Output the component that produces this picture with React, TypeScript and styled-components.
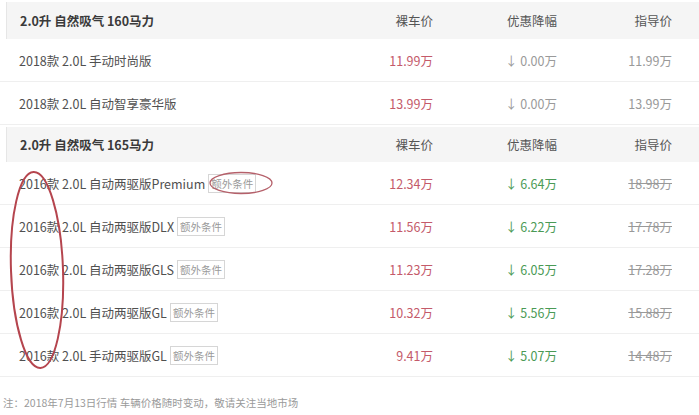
import React from "react";
import styled, { createGlobalStyle } from "styled-components";

const Global = createGlobalStyle`
  html, body { margin: 0; padding: 0; background: #fff; }
  body { font-family: "Noto Sans CJK SC", "Noto Sans", sans-serif; }
`;

const Page = styled.div`
  position: relative;
  width: 699px;
  height: 415px;
  overflow: hidden;
  background: #fff;
`;

const Table = styled.div`
  display: flex;
  flex-direction: column;
`;

const GroupHead = styled.div<{ $h: number }>`
  display: grid;
  grid-template-columns: 1fr 100px 124px 115px;
  align-items: center;
  height: ${(p) => p.$h}px;
  margin: 2px 0 0 6px;
  padding: 0 27px 0 13px;
  background: #f5f5f5;
  border-left: 1px solid #e6e6e6;
  font-size: 12.5px;
  color: #555;
`;

const GroupTitle = styled.div`
  font-weight: bold;
  color: #3a3a3a;
`;

const Row = styled.div`
  display: grid;
  grid-template-columns: 1fr 100px 124px 115px;
  align-items: center;
  height: 43px;
  padding: 0 27px 0 19px;
  border-bottom: 1px solid #efefef;
  box-sizing: border-box;
  font-size: 12.5px;
  color: #505050;
`;

const Cell = styled.div`
  text-align: right;
  white-space: nowrap;
`;

const Name = styled.div`
  display: flex;
  align-items: center;
  white-space: nowrap;
`;

const Tag = styled.span`
  display: inline-block;
  margin-left: 3px;
  padding: 0 2px;
  height: 17px;
  line-height: 17px;
  border: 1px solid #d6d6d6;
  font-size: 10.5px;
  color: #9a9a9a;
`;

const Price = styled(Cell)`
  color: #c45a6a;
`;

const Drop = styled(Cell)<{ $zero: boolean }>`
  color: ${(p) => (p.$zero ? "#9a9a9a" : "#4a9a55")};
`;

const Guide = styled(Cell)<{ $strike: boolean }>`
  color: #999;
  text-decoration: ${(p) => (p.$strike ? "line-through" : "none")};
`;

const Note = styled.div`
  padding: 18px 0 0 3px;
  font-size: 10.5px;
  color: #9a9a9a;
`;

const Marks = styled.svg`
  position: absolute;
  left: 0;
  top: 0;
  pointer-events: none;
`;

type Car = { name: string; tag?: boolean; price: string; drop: string; guide: string };

const groups: { title: string; h: number; cars: Car[] }[] = [
  {
    title: "2.0升 自然吸气 160马力",
    h: 37,
    cars: [
      { name: "2018款 2.0L 手动时尚版", price: "11.99万", drop: "0.00万", guide: "11.99万" },
      { name: "2018款 2.0L 自动智享豪华版", price: "13.99万", drop: "0.00万", guide: "13.99万" },
    ],
  },
  {
    title: "2.0升 自然吸气 165马力",
    h: 35,
    cars: [
      { name: "2016款 2.0L 自动两驱版Premium", tag: true, price: "12.34万", drop: "6.64万", guide: "18.98万" },
      { name: "2016款 2.0L 自动两驱版DLX", tag: true, price: "11.56万", drop: "6.22万", guide: "17.78万" },
      { name: "2016款 2.0L 自动两驱版GLS", tag: true, price: "11.23万", drop: "6.05万", guide: "17.28万" },
      { name: "2016款 2.0L 自动两驱版GL", tag: true, price: "10.32万", drop: "5.56万", guide: "15.88万" },
      { name: "2016款 2.0L 手动两驱版GL", tag: true, price: "9.41万", drop: "5.07万", guide: "14.48万" },
    ],
  },
];

export default function App() {
  return (
    <>
      <Global />
      <Page>
        <Table>
          {groups.map((g) => (
            <React.Fragment key={g.title}>
              <GroupHead $h={g.h}>
                <GroupTitle>{g.title}</GroupTitle>
                <Cell>裸车价</Cell>
                <Cell>优惠降幅</Cell>
                <Cell>指导价</Cell>
              </GroupHead>
              {g.cars.map((c) => {
                const zero = c.drop === "0.00万";
                return (
                  <Row key={c.name}>
                    <Name>
                      {c.name}
                      {c.tag && <Tag>额外条件</Tag>}
                    </Name>
                    <Price>{c.price}</Price>
                    <Drop $zero={zero}>↓ {c.drop}</Drop>
                    <Guide $strike={!zero}>{c.guide}</Guide>
                  </Row>
                );
              })}
            </React.Fragment>
          ))}
        </Table>
        <Note>注：2018年7月13日行情 车辆价格随时变动，敬请关注当地市场</Note>
        <Marks width="699" height="415" viewBox="0 0 699 415">
          <ellipse cx="37" cy="270" rx="26" ry="98" fill="none" stroke="#b5454e" strokeWidth="2" transform="rotate(-2 37 270)" />
          <ellipse cx="241" cy="183" rx="31" ry="10.5" fill="none" stroke="#b5606a" strokeWidth="1.3" />
        </Marks>
      </Page>
    </>
  );
}
